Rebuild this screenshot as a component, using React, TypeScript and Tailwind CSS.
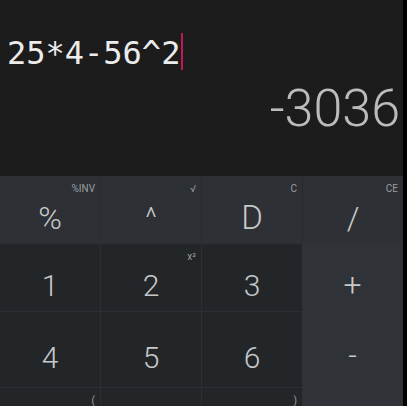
import React from "react";

type KeyProps = {
  label: string;
  sup?: string;
  size?: string;
};

function Key({ label, sup, size = "text-[30px]" }: KeyProps) {
  return (
    <div className="relative flex items-center justify-center pt-4">
      {sup && (
        <span className="absolute top-[7px] right-[5px] text-[10px] leading-[12px] text-[#9a9da0]">
          {sup}
        </span>
      )}
      <span className={`${size} font-light leading-none text-[#c6c8ca]`}>{label}</span>
    </div>
  );
}

export default function App() {
  const digits = [
    { label: "1" },
    { label: "2", sup: "x²" },
    { label: "3" },
    { label: "4" },
    { label: "5" },
    { label: "6" },
    { label: "7", sup: "(" },
    { label: "8" },
    { label: "9", sup: ")" },
  ];

  return (
    <div
      className="flex w-[407px] h-[406px] bg-black overflow-hidden"
      style={{ fontFamily: "Roboto, 'Noto Sans', sans-serif" }}
    >
      <div className="w-[403px] flex flex-col overflow-hidden">
        {/* display */}
        <div className="h-[176px] shrink-0 bg-[#1c1c1c] flex flex-col">
          <div className="pt-[33px] pl-[7px] flex items-start">
            <span className="font-['DejaVu_Sans_Mono',monospace] text-[32px] leading-[40px] text-[#ececec]">
              25*4-56^2
            </span>
            <span className="ml-[1px] w-[2px] h-[37px] bg-[#c2185b]" />
          </div>
          <div className="mt-[6px] pr-[3px] text-right text-[52px] leading-[60px] font-light text-[#bcbcbc]">
            -3036
          </div>
        </div>

        {/* function row */}
        <div className="h-[67px] grid grid-cols-4 gap-px bg-[#282b2e] shrink-0">
          <div className="bg-[#2d3034] grid">
            <Key label="%" sup="%INV" size="text-[32px]" />
          </div>
          <div className="bg-[#2d3034] grid">
            <Key label="^" sup="√" size="text-[28px]" />
          </div>
          <div className="bg-[#2d3034] grid">
            <Key label="D" sup="C" size="text-[33px]" />
          </div>
          <div className="bg-[#2d3034] grid">
            <Key label="/" sup="CE" size="text-[32px]" />
          </div>
        </div>

        {/* number pad + operators */}
        <div className="flex shrink-0">
          <div className="w-[302px] grid grid-cols-3 grid-rows-[67px_75px_75px] gap-px bg-[#2b2e32] pt-px">
            {digits.map((d) => (
              <div key={d.label} className="bg-[#232629] grid">
                <Key label={d.label} sup={d.sup} />
              </div>
            ))}
          </div>
          <div className="w-[101px] bg-[#2f3236] grid grid-rows-[67px_75px_75px]">
            <Key label="+" size="text-[32px]" />
            <Key label="-" size="text-[30px]" />
            <Key label="×" size="text-[30px]" />
          </div>
        </div>
      </div>
    </div>
  );
}
